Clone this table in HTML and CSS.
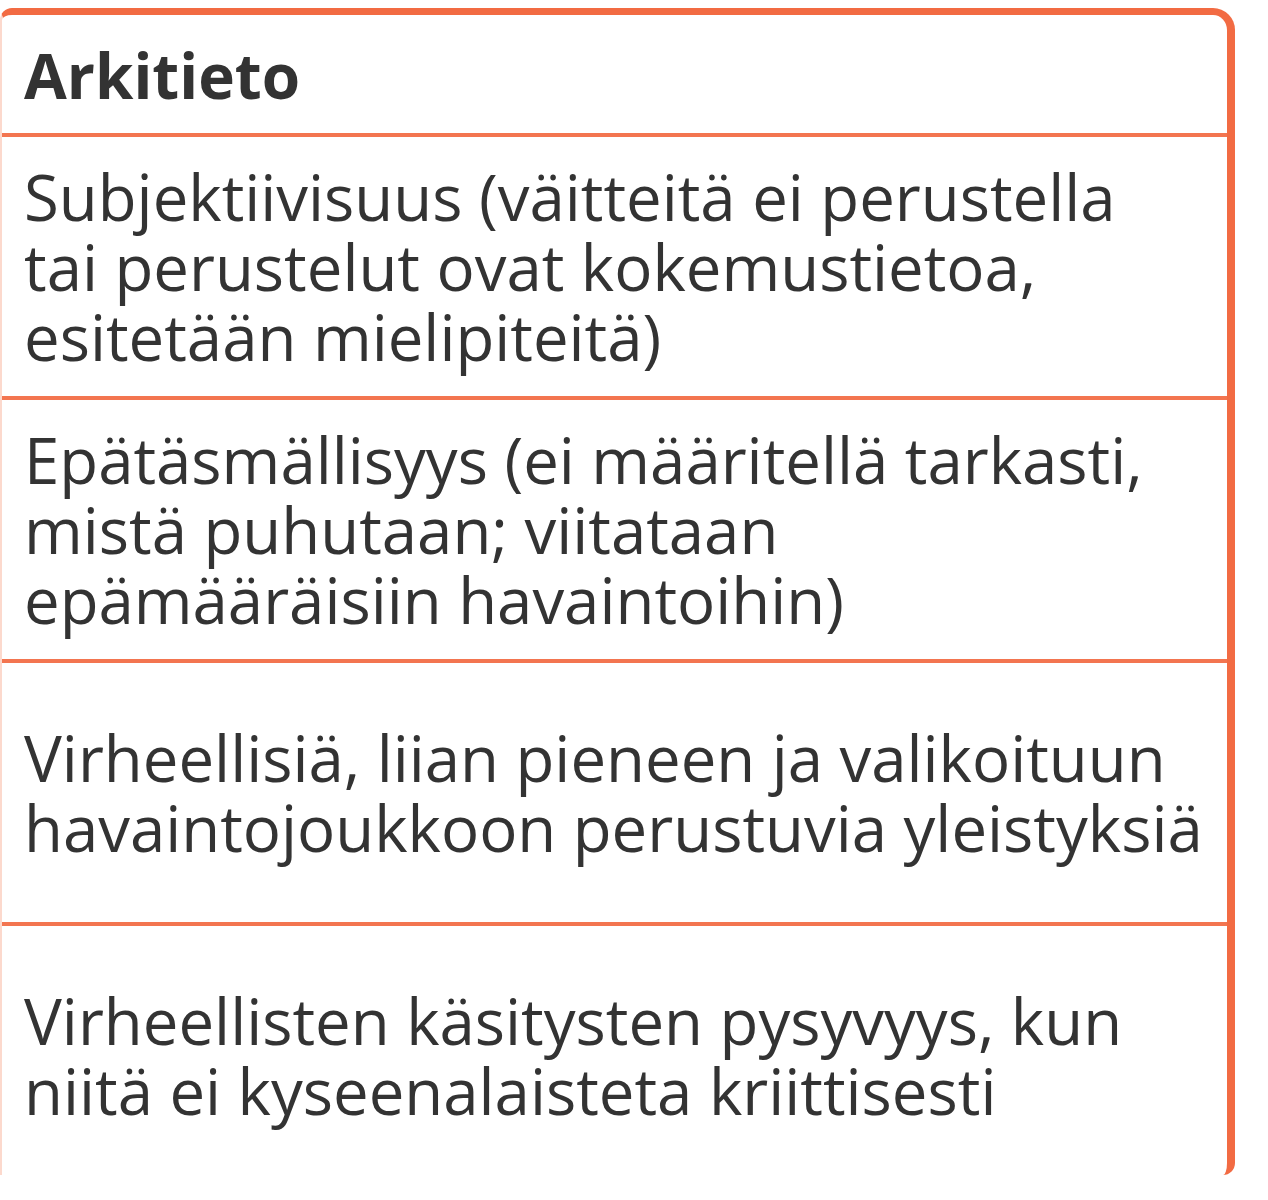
FILE: index.html
```html
<!DOCTYPE html>
<html lang="fi">
<head>
<meta charset="utf-8">
<link rel="stylesheet" href="styles.css">
</head>
<body>
<div class="card">
  <div class="head">Arkitieto</div>
  <div class="row">Subjektiivisuus (väitteitä ei perustella<br>tai perustelut ovat kokemustietoa,<br>esitetään mielipiteitä)</div>
  <div class="row">Epätäsmällisyys (ei määritellä tarkasti,<br>mistä puhutaan; viitataan<br>epämääräisiin havaintoihin)</div>
  <div class="row">Virheellisiä, liian pieneen ja valikoituun<br>havaintojoukkoon perustuvia yleistyksiä</div>
  <div class="row">Virheellisten käsitysten pysyvyys, kun<br>niitä ei kyseenalaisteta kriittisesti</div>
</div>
</body>
</html>
```
FILE: styles.css
```css
html, body {
  margin: 0;
  padding: 0;
  background: #ffffff;
}
body {
  padding-top: 8px;
  font-family: "Open Sans", "Noto Sans", sans-serif;
  color: #333333;
}
.card {
  width: 1235px;
  height: 1167px;
  overflow: hidden;
  border-top: 7px solid #f26b43;
  border-right: 8px solid #f26b43;
  border-left: 2px solid #fcd9cd;
  border-bottom: 0;
  border-radius: 12px 22px 12px 0;
  box-sizing: border-box;
}
.head {
  font-size: 62px;
  line-height: 70px;
  font-weight: 700;
  padding: 25px 22px 23px;
}
.row {
  border-top: 4px solid #f37550;
  height: 259px;
  display: flex;
  align-items: center;
  padding: 0 22px;
  font-size: 63.5px;
  line-height: 70px;
}
```
